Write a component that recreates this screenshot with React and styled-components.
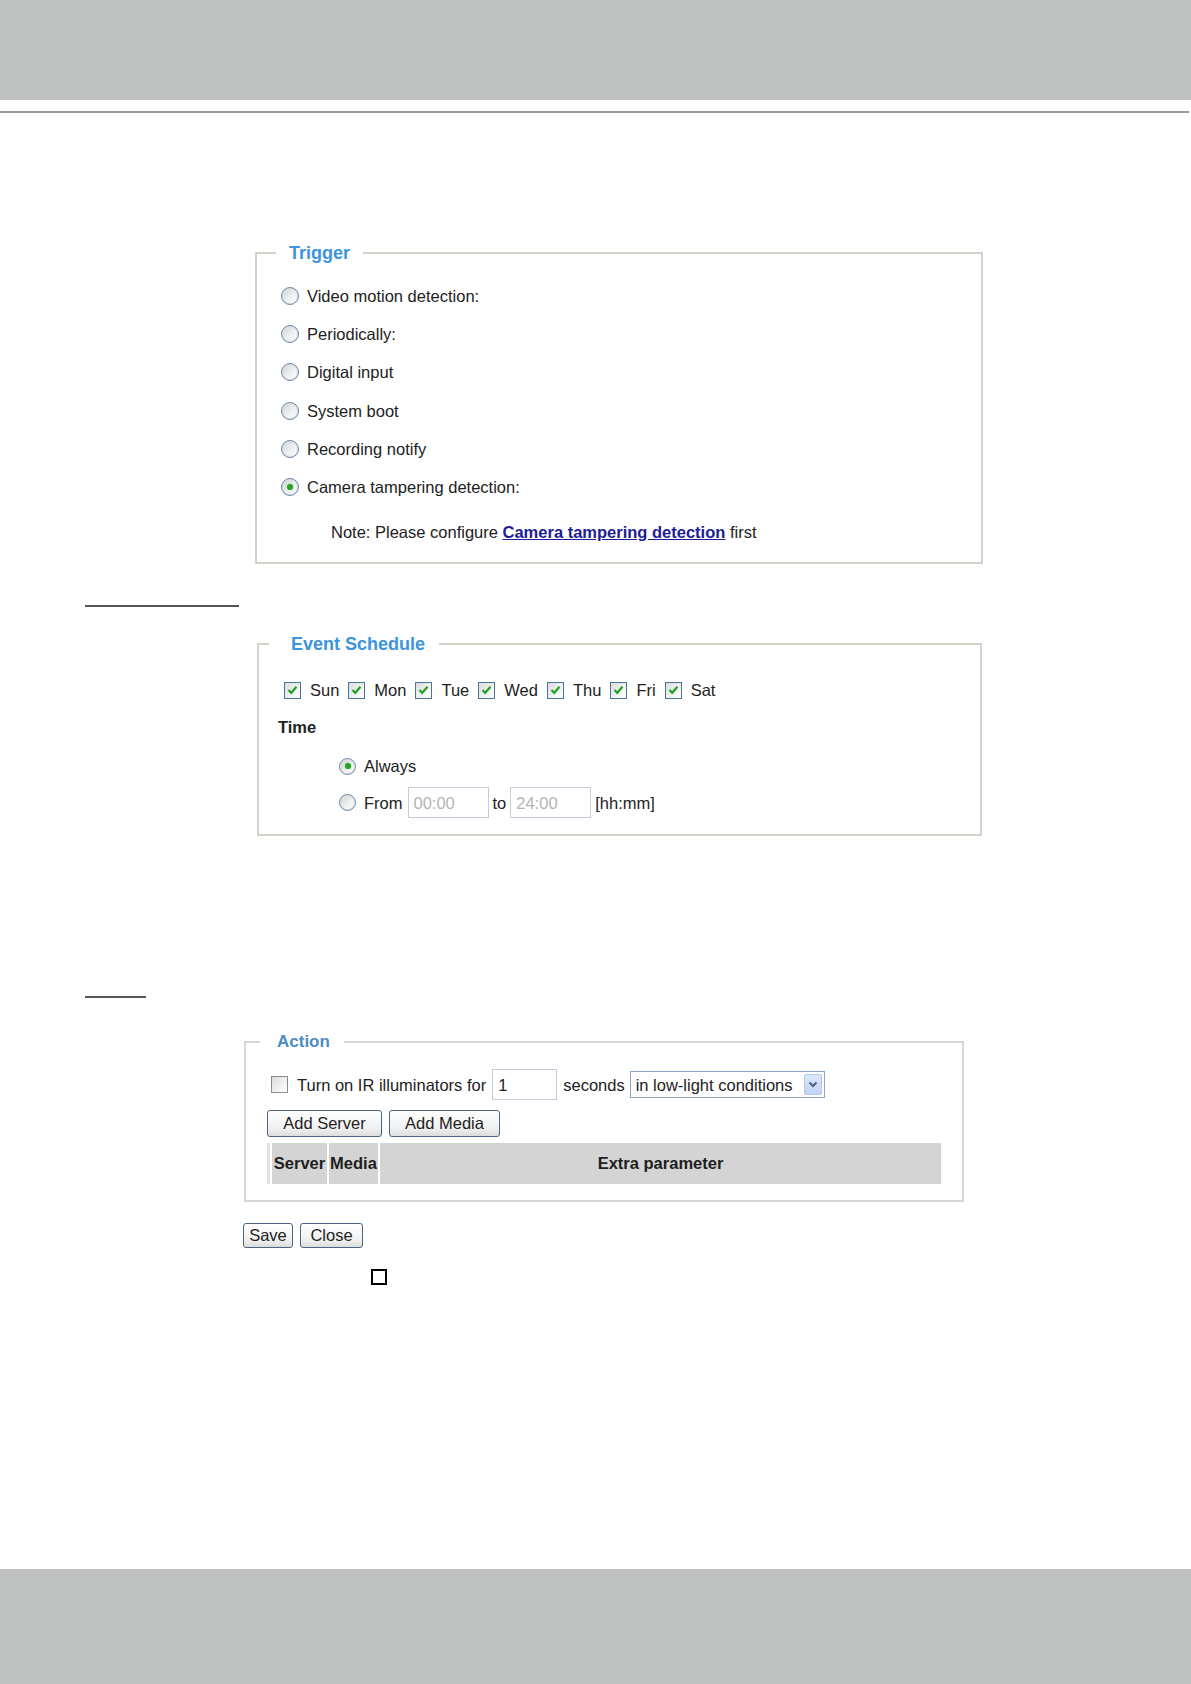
import styled, { createGlobalStyle } from 'styled-components';

const Global = createGlobalStyle`
  body {
    margin: 0;
    background: #fff;
    font-family: "Liberation Sans", Arial, sans-serif;
    color: #222;
  }
`

const Page = styled.div`
  display: flex;
  flex-direction: column;
  width: 1191px;
  min-height: 1684px;
`

const Header = styled.div`
  height: 100px;
  background: #bfc1c0;
`

const Rule = styled.div`
  margin-top: 11px;
  width: 1189px;
  height: 2px;
  background: #9a9a9a;
`

const Footer = styled.div`
  margin-top: auto;
  height: 115px;
  background: #bfc1c0;
`

const SectionRule = styled.div`
  margin: ${p => p.$top}px 0 0 85px;
  width: ${p => p.$width}px;
  height: 2px;
  background: #555;
`

const Panel = styled.fieldset`
  box-sizing: border-box;
  margin: ${p => p.$top}px 0 0 ${p => p.$left}px;
  width: ${p => p.$width}px;
  min-width: 0;
  padding: 0;
  border: 2px solid ${p => p.$line || '#d5d2ca'};
`

const Legend = styled.legend`
  margin-left: ${p => p.$offset}px;
  padding: 0 ${p => p.$padR}px 0 ${p => p.$padL}px;
  font-family: "Liberation Sans", Arial, sans-serif;
  font-weight: bold;
  font-size: ${p => p.$size}px;
  line-height: 20px;
  color: ${p => p.$color || '#3b94dc'};
`

const Body = styled.div`
  padding: ${p => p.$pt}px 0 ${p => p.$pb}px ${p => p.$pl || 0}px;
`

const Row = styled.div`
  display: flex;
  align-items: center;
  height: ${p => p.$h}px;
  margin-top: ${p => p.$mt || 0}px;
  padding-left: ${p => p.$pl || 0}px;
  font-size: 16.5px;
  line-height: 20px;
  white-space: nowrap;
`

const Radio = styled.span`
  box-sizing: border-box;
  display: inline-flex;
  align-items: center;
  justify-content: center;
  flex: none;
  width: ${p => p.$size}px;
  height: ${p => p.$size}px;
  margin-right: 8px;
  border-radius: 50%;
  border: 1px solid #6f87a2;
  box-shadow: inset 0 0 0 1px #d8e0ea;
  background: linear-gradient(135deg, #d2d2d2, #f2f2f2 60%, #fff);

  &::after {
    content: '';
    display: ${p => (p.$checked ? 'block' : 'none')};
    width: 6px;
    height: 6px;
    border-radius: 50%;
    background: #25a325;
    box-shadow: 0 0 2px #7bd27b;
  }
`

const Box = styled.span`
  box-sizing: border-box;
  display: inline-flex;
  align-items: center;
  justify-content: center;
  flex: none;
  width: 17px;
  height: 17px;
  margin-right: 9px;
  border: 1px solid ${p => (p.$checked ? '#4a7398' : '#8c8c8c')};
  background: linear-gradient(135deg, #dcdcdc, #f6f6f6 70%, #fff);
`

const DayItem = styled.span`
  display: inline-flex;
  align-items: center;
  margin-right: 9px;
`

const Note = styled.div`
  margin-top: 16px;
  padding-left: 74px;
  font-size: 16.5px;
  line-height: 20px;
`

const Link = styled.a`
  font-weight: bold;
  color: #1d1d96;
  text-decoration: underline;
`

const Caption = styled.div`
  margin-top: ${p => p.$mt}px;
  padding-left: ${p => p.$pl}px;
  font-weight: bold;
  font-size: 16.5px;
  line-height: 20px;
`

const Field = styled.span`
  box-sizing: border-box;
  display: inline-flex;
  align-items: center;
  width: ${p => p.$w}px;
  height: ${p => p.$h}px;
  margin: 0 ${p => p.$mr || 0}px 0 ${p => p.$ml || 0}px;
  padding-left: 5px;
  border: 1px solid #c3ccd8;
  background: #fff;
  color: ${p => (p.$muted ? '#b4b4b4' : '#222')};
  font-size: 16.5px;
`

const Select = styled.span`
  box-sizing: border-box;
  display: inline-flex;
  align-items: center;
  justify-content: space-between;
  width: 195px;
  height: 27px;
  margin-left: 5px;
  padding: 0 2px 0 5px;
  border: 1px solid #8aa3c0;
  font-size: 16.5px;
`

const SelectArrow = styled.span`
  box-sizing: border-box;
  display: inline-flex;
  align-items: center;
  justify-content: center;
  width: 18px;
  height: 21px;
  border: 1px solid #b3c6ee;
  border-radius: 2px;
  background: linear-gradient(#dde7fb, #c2d3f6);
`

const Buttons = styled.div`
  display: flex;
  gap: 7px;
  margin: ${p => p.$mt}px 0 0 ${p => p.$ml}px;
`

const Button = styled.button`
  box-sizing: border-box;
  width: ${p => p.$w}px;
  height: ${p => p.$h}px;
  padding: 0;
  border: 1px solid #4b6581;
  border-radius: 3px;
  background: linear-gradient(#ffffff, #f0f0f0 70%, #dcdcdc);
  font-family: "Liberation Sans", Arial, sans-serif;
  font-size: 16.5px;
  color: #222;
`

const Table = styled.div`
  display: grid;
  grid-template-columns: 55px 49px 1fr;
  gap: 2px;
  width: 674px;
  height: 41px;
  margin: 6px 0 0 21px;
  padding-left: 2px;
  border-left: 3px solid #e2e2e2;
  box-sizing: border-box;
`

const HeadCell = styled.div`
  display: flex;
  align-items: center;
  justify-content: center;
  background: #d4d4d4;
  font-weight: bold;
  font-size: 16.5px;
  color: #1e1e1e;
`

const Marker = styled.div`
  box-sizing: border-box;
  margin: 21px 0 0 371px;
  width: 16px;
  height: 16px;
  border: 2px solid #000;
`

const Check = () => (
  <svg width="11" height="10" viewBox="0 0 11 10">
    <path d="M1.5 5 L4.2 7.8 L9.5 1.8" fill="none" stroke="#21a321" strokeWidth="2.2" />
  </svg>
)

const Chevron = () => (
  <svg width="10" height="7" viewBox="0 0 10 7">
    <path d="M1.5 1.5 L5 5 L8.5 1.5" fill="none" stroke="#4a5f86" strokeWidth="2" />
  </svg>
)

const triggers = [
  'Video motion detection:',
  'Periodically:',
  'Digital input',
  'System boot',
  'Recording notify',
  'Camera tampering detection:',
]

const days = ['Sun', 'Mon', 'Tue', 'Wed', 'Thu', 'Fri', 'Sat']

export default function App() {
  return (
    <Page>
      <Global />
      <Header />
      <Rule />

      <Panel $top={130} $left={255} $width={728}>
        <Legend $offset={19} $padL={13} $padR={13} $size={18}>Trigger</Legend>
        <Body $pt={14} $pb={20}>
          {triggers.map((t, i) => (
            <Row key={t} $h={38.2} $pl={24}>
              <Radio $size={18} $checked={i === triggers.length - 1} />
              {t}
            </Row>
          ))}
          <Note>
            Note: Please configure <Link>Camera tampering detection</Link> first
          </Note>
        </Body>
      </Panel>

      <SectionRule $top={41} $width={154} />

      <Panel $top={27} $left={257} $width={725}>
        <Legend $offset={10} $padL={22} $padR={14} $size={18}>Event Schedule</Legend>
        <Body $pt={24} $pb={16}>
          <Row $h={24} $pl={25}>
            {days.map(d => (
              <DayItem key={d}>
                <Box $checked><Check /></Box>
                {d}
              </DayItem>
            ))}
          </Row>
          <Caption $mt={15} $pl={19}>Time</Caption>
          <Row $h={20} $mt={19} $pl={80}>
            <Radio $size={17} $checked />
            Always
          </Row>
          <Row $h={31} $mt={11} $pl={80}>
            <Radio $size={17} />
            From
            <Field $w={81} $h={31} $ml={5} $mr={4} $muted>00:00</Field>
            to
            <Field $w={81} $h={31} $ml={4} $mr={4} $muted>24:00</Field>
            [hh:mm]
          </Row>
        </Body>
      </Panel>

      <SectionRule $top={160} $width={61} />

      <Panel $top={34} $left={244} $width={720} $line="#d6d6d6">
        <Legend $offset={14} $padL={17} $padR={14} $size={17} $color="#4b8cc4">Action</Legend>
        <Body $pt={17} $pb={16}>
          <Row $h={31} $pl={25}>
            <Box />
            Turn on IR illuminators for
            <Field $w={65} $h={31} $ml={6} $mr={6}>1</Field>
            seconds
            <Select>
              in low-light conditions
              <SelectArrow><Chevron /></SelectArrow>
            </Select>
          </Row>
          <Buttons $mt={10} $ml={21}>
            <Button $w={115} $h={27}>Add Server</Button>
            <Button $w={111} $h={27}>Add Media</Button>
          </Buttons>
          <Table>
            <HeadCell>Server</HeadCell>
            <HeadCell>Media</HeadCell>
            <HeadCell>Extra parameter</HeadCell>
          </Table>
        </Body>
      </Panel>

      <Buttons $mt={21} $ml={243}>
        <Button $w={50} $h={25}>Save</Button>
        <Button $w={63} $h={25}>Close</Button>
      </Buttons>

      <Marker />

      <Footer />
    </Page>
  )
}
